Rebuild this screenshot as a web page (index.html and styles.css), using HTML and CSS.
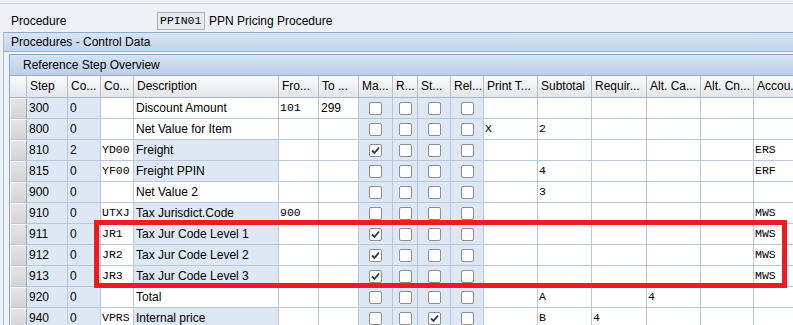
FILE: index.html
```html
<!DOCTYPE html>
<html lang="en">
<head>
  <meta charset="UTF-8">
  <title>Procedures - Control Data</title>
  <link rel="stylesheet" href="styles.css">
</head>
<body>
  <div class="topcut"></div>
  <div class="procline">
    <span class="lbl">Procedure</span>
    <span class="field mono">PPIN01</span>
    <span class="proc-desc">PPN Pricing Procedure</span>
  </div>
  <div class="panel">
    <div class="panel-head">Procedures - Control Data</div>
    <div class="panel-body">
      <div class="tc">
        <div class="tc-title">Reference Step Overview</div>
        <div id="grid" class="grid">
          <div class="hrow">
            <div class="hc"></div>
            <div class="hc">Step</div>
            <div class="hc">Co...</div>
            <div class="hc">Co...</div>
            <div class="hc">Description</div>
            <div class="hc">Fro...</div>
            <div class="hc">To ...</div>
            <div class="hc">Ma...</div>
            <div class="hc">R...</div>
            <div class="hc">St...</div>
            <div class="hc">Rel...</div>
            <div class="hc">Print T...</div>
            <div class="hc">Subtotal</div>
            <div class="hc">Requir...</div>
            <div class="hc">Alt. Ca...</div>
            <div class="hc">Alt. Cn...</div>
            <div class="hc">Accou.</div>
          </div>
        </div>
      </div>
    </div>
  </div>
  <div class="marker"></div>

  <script>
    // step, counter, cond type, description, from, to, [manual, required, statistical, relevant], print, subtotal, requirement, alt calc, alt base, account key
    const rows = [
      ['300', '0', '', 'Discount Amount', '101', '299', [0, 0, 0, 0], '', '', '', '', '', ''],
      ['800', '0', '', 'Net Value for Item', '', '', [0, 0, 0, 0], 'X', '2', '', '', '', ''],
      ['810', '2', 'YD00', 'Freight', '', '', [1, 0, 0, 0], '', '', '', '', '', 'ERS'],
      ['815', '0', 'YF00', 'Freight PPIN', '', '', [0, 0, 0, 0], '', '4', '', '', '', 'ERF'],
      ['900', '0', '', 'Net Value 2', '', '', [0, 0, 0, 0], '', '3', '', '', '', ''],
      ['910', '0', 'UTXJ', 'Tax Jurisdict.Code', '900', '', [0, 0, 0, 0], '', '', '', '', '', 'MWS'],
      ['911', '0', 'JR1', 'Tax Jur Code Level 1', '', '', [1, 0, 0, 0], '', '', '', '', '', 'MWS'],
      ['912', '0', 'JR2', 'Tax Jur Code Level 2', '', '', [1, 0, 0, 0], '', '', '', '', '', 'MWS'],
      ['913', '0', 'JR3', 'Tax Jur Code Level 3', '', '', [1, 0, 0, 0], '', '', '', '', '', 'MWS'],
      ['920', '0', '', 'Total', '', '', [0, 0, 0, 0], '', 'A', '', '4', '', ''],
      ['940', '0', 'VPRS', 'Internal price', '', '', [0, 0, 1, 0], '', 'B', '4', '', '', '']
    ];

    const tick = '<svg width="11" height="11" viewBox="0 0 11 11"><path d="M2 5.5 L4.5 8 L9 2.5" fill="none" stroke="#26365a" stroke-width="1.8"/></svg>';
    const grid = document.getElementById('grid');

    function cell(cls, text) {
      return `<div class="c ${cls}">${text}</div>`;
    }

    rows.forEach(function (r) {
      const ro = r[2] ? ' ro' : '';
      let html = '<div class="sel"></div>';
      html += cell('ro', r[0]);
      html += cell('ro', r[1]);
      html += cell('mono', r[2]);
      html += cell(ro, r[3]);
      html += cell('mono', r[4]);
      html += cell('', r[5]);
      r[6].forEach(function (on) {
        html += cell('chk', `<span class="cb">${on ? tick : ''}</span>`);
      });
      for (let i = 7; i < 13; i++) {
        html += cell('mono', r[i]);
      }
      const row = document.createElement('div');
      row.className = 'row';
      row.innerHTML = html;
      grid.appendChild(row);
    });
  </script>
</body>
</html>
```

FILE: styles.css
```css
body {
  margin: 0;
  position: relative;
  width: 793px;
  height: 325px;
  overflow: hidden;
  background: #eef1f6;
  font-family: "Liberation Sans", Arial, sans-serif;
  font-size: 12px;
  color: #000;
}
.mono {
  font-family: "Liberation Mono", "Courier New", monospace;
  font-size: 11.5px;
}
.topcut {
  height: 3px;
  border-bottom: 1px solid #d3d9e2;
}
.procline {
  height: 23px;
  padding-top: 5px;
  display: flex;
  align-items: center;
  padding-left: 11px;
}
.lbl {
  width: 146px;
}
.field {
  box-sizing: border-box;
  width: 48px;
  height: 18px;
  line-height: 16px;
  padding-left: 2px;
  border: 1px solid #a9b3c0;
  background: #e6ebf2;
}
.proc-desc {
  margin-left: 4px;
}
.panel {
  margin-left: 3px;
  border-top: 1px solid #8eaacb;
  border-left: 1px solid #a9bcd3;
}
.panel-head {
  height: 18px;
  line-height: 18px;
  padding-left: 7px;
  background: linear-gradient(#d7e4f3, #c2d5ec);
  border-bottom: 1px solid #9cb3cf;
}
.panel-body {
  padding: 2px 0 0 5px;
}
.tc {
  border-left: 1px solid #8da6c4;
  border-top: 1px solid #8da6c4;
  background: #fff;
}
.tc-title {
  height: 20px;
  line-height: 20px;
  padding-left: 13px;
  background: linear-gradient(#d4e2f2, #bcd0e8);
  border-bottom: 1px solid #96aecb;
}
.hrow, .row {
  display: grid;
  grid-template-columns: 17px 41px 33px 33px 145px 40px 40px 34px 25px 33px 33px 54px 54px 55px 54px 53px 70px;
}
.hc {
  box-sizing: border-box;
  height: 22px;
  line-height: 21px;
  padding-left: 3px;
  white-space: nowrap;
  overflow: hidden;
  background: linear-gradient(#fafbfc, #e2e6eb);
  border-right: 1px solid #b4bcc7;
  border-bottom: 1px solid #a9b5c4;
}
.c {
  box-sizing: border-box;
  height: 21px;
  line-height: 20px;
  padding-left: 2px;
  white-space: nowrap;
  overflow: hidden;
  background: #fff;
  border-right: 1px solid #b9c8d8;
  border-bottom: 1px solid #b9c8d8;
}
.c.mono {
  padding-left: 1px;
}
.c.ro {
  background: #dde8f4;
}
.c.chk {
  display: flex;
  align-items: center;
  justify-content: center;
  padding-left: 0;
  background: #dde8f4;
}
.sel {
  box-sizing: border-box;
  height: 21px;
  background: linear-gradient(#e4e4e4, #d4d4d4);
  border-top: 1px solid #f5f5f5;
  border-left: 1px solid #f5f5f5;
  border-right: 1px solid #9ca8b6;
  border-bottom: 1px solid #b9c8d8;
}
.cb {
  box-sizing: border-box;
  width: 13px;
  height: 13px;
  display: flex;
  align-items: center;
  justify-content: center;
  border: 1px solid #8e8e8e;
  border-radius: 2px;
  background: #fff;
}
.marker {
  position: absolute;
  left: 94px;
  top: 220px;
  width: 693px;
  height: 68px;
  box-sizing: border-box;
  border: 5px solid #ed1c24;
}
```
